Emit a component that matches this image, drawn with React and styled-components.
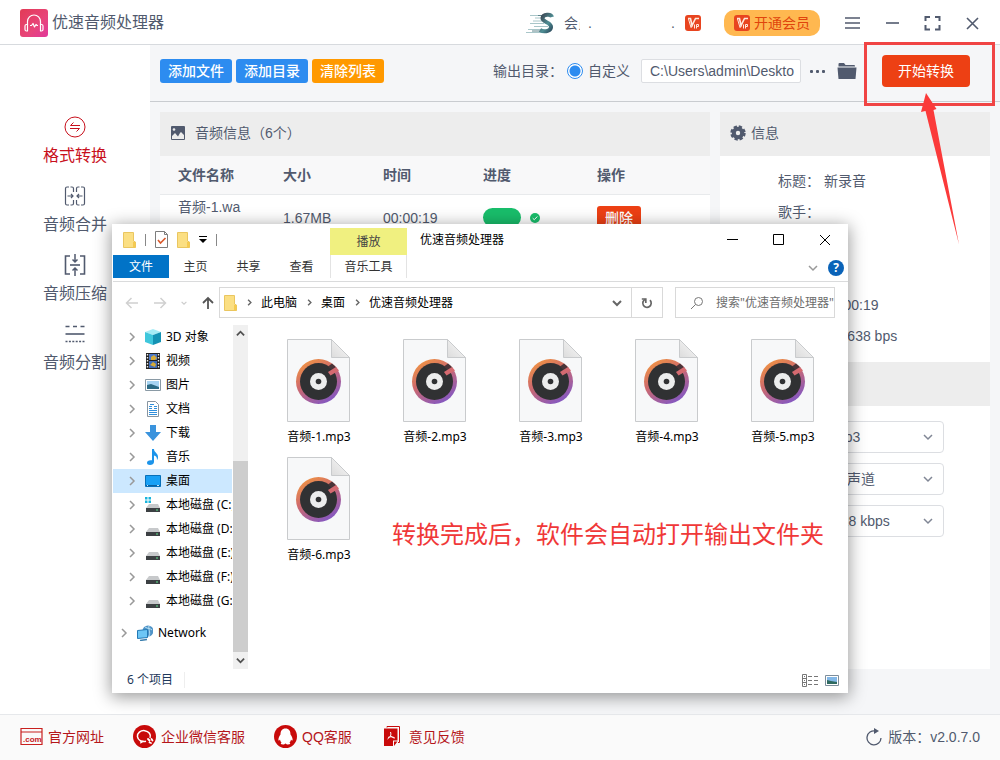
import React from 'react';
import styled, { createGlobalStyle } from 'styled-components';

const GlobalStyle = createGlobalStyle`
  * {
    box-sizing: border-box;
  }

  body {
    margin: 0;
    font-family: 'Liberation Sans', 'Noto Sans CJK SC', sans-serif;
    font-size: 14px;
    line-height: 20px;
    color: #515a6e;
  }

  button, input, select {
    font: inherit;
    color: inherit;
    margin: 0;
  }

  svg {
    display: block;
    flex: none;
  }
`;

// ---------- data ----------

const menuItems = [
  { title: '格式转换', icon: 'convert', active: true },
  { title: '音频合并', icon: 'merge' },
  { title: '音频压缩', icon: 'compress' },
  { title: '音频分割', icon: 'split' },
];

const audioFiles = [
  { name: '音频-1.wav', size: '1.67MB', time: '00:00:19' },
];

const details = [
  { label: '标题：', value: '新录音' },
  { label: '歌手：', value: '' },
  { label: '专辑：', value: '' },
  { label: '年代：', value: '' },
  { label: '时长：', value: '00:00:19' },
  { label: '码率：', value: '705638 bps' },
];

const settings = [
  { id: 'format', label: '格式：', value: 'mp3' },
  { id: 'channel', label: '声道：', value: '双声道' },
  { id: 'bitrate', label: '码率：', value: '128 kbps' },
];

const treeItems = [
  { title: '3D 对象', icon: 'cube' },
  { title: '视频', icon: 'video' },
  { title: '图片', icon: 'picture' },
  { title: '文档', icon: 'document' },
  { title: '下载', icon: 'download' },
  { title: '音乐', icon: 'music' },
  { title: '桌面', icon: 'desktop', active: true },
  { title: '本地磁盘 (C:)', icon: 'systemDisk' },
  { title: '本地磁盘 (D:)', icon: 'disk' },
  { title: '本地磁盘 (E:)', icon: 'disk' },
  { title: '本地磁盘 (F:)', icon: 'disk' },
  { title: '本地磁盘 (G:)', icon: 'disk' },
];

const outputFiles = ['音频-1.mp3', '音频-2.mp3', '音频-3.mp3', '音频-4.mp3', '音频-5.mp3', '音频-6.mp3'];

const links = [
  { title: '官方网址', icon: 'site' },
  { title: '企业微信客服', icon: 'wechat' },
  { title: 'QQ客服', icon: 'qq' },
  { title: '意见反馈', icon: 'feedback' },
];

// ---------- icons ----------

const LogoIcon = () => (
  <svg width="28" height="28" viewBox="0 0 28 28">
    <defs>
      <linearGradient id="logo" x1="0" y1="0" x2="1" y2="1">
        <stop offset="0" stopColor="#e23a55" />
        <stop offset="0.6" stopColor="#e8457a" />
        <stop offset="1" stopColor="#e0389c" />
      </linearGradient>
    </defs>
    <rect width="28" height="28" rx="3" fill="url(#logo)" />
    <g fill="none" stroke="#fff" strokeWidth="1.2" strokeLinejoin="round">
      <path d="M7.5 16v-3.500a6.500 6.500 0 0 1 13 0V16" />
      <path d="M7.500 15.500v6.500H6.500a1.500 1.500 0 0 1-1.500-1.500V17A1.500 1.500 0 0 1 6.500 15.500zM20.500 15.500v6.500H21.500a1.500 1.500 0 0 0 1.500-1.500V17a1.500 1.500 0 0 0-1.500-1.500z" />
      <path d="M10 16.500h1.500l1.500-2 1.500 3.500 1.500-2.500 1 1h1" />
    </g>
  </svg>
);

const AvatarIcon = () => (
  <svg width="28" height="24" viewBox="0 0 28 24">
    <defs>
      <linearGradient id="avatar" x1="0" y1="0" x2="1" y2="1">
        <stop offset="0" stopColor="#3a3f4c" />
        <stop offset="0.6" stopColor="#4f8f95" />
        <stop offset="1" stopColor="#2d4a5c" />
      </linearGradient>
    </defs>
    <path d="M4 4.500h14M9 7h7M7 10h9M4 12.500h14M8 15.500h14M2 18.500h14M0 21.500h22" stroke="#a9c6c9" strokeWidth="1" />
    <path d="M12 4.500h7M6 20h13" stroke="#5f858c" strokeWidth="1" />
    <path d="M26 6C25 2.500 17 3 16.500 7 16 11.500 26 11 25 16.500 24 21 17 21 14 19" fill="none" stroke="url(#avatar)" strokeWidth="4" />
  </svg>
);

const VipIcon = () => (
  <svg width="16" height="16" viewBox="0 0 16 16">
    <rect width="16" height="16" rx="3" fill="#e8441f" />
    <path d="M3 3.500h2.500l1.500 7 3.500-7H14" fill="none" stroke="#ffe9dc" strokeWidth="1.600" />
    <path d="M3.500 4l2.500 8.500 1.500-2M9.500 9.500v4M11.500 13.500v-4h2v2h-2" fill="none" stroke="#ffe9dc" strokeWidth="1" />
  </svg>
);

const windowPaths = {
  menu: 'M1 3h15M1 8h15M1 13h15',
  minimize: 'M2 8h13',
  fullscreen: 'M1.500 6V2H6M11 2h4.500v4M15.500 10v4.500H11M6 14.500H1.500V10',
  close: 'M3 3l11 11M14 3L3 14',
};

const WindowIcon = ({ name }) => (
  <svg width="17" height="17" viewBox="0 0 17 17" fill="none" stroke="#515a6e" strokeWidth={name === 'fullscreen' ? 2 : 1.6}>
    <path d={windowPaths[name]} />
  </svg>
);

const MenuIcon = ({ name }) => (
  <svg width="22" height="22" viewBox="0 0 22 22" fill="none" stroke="currentColor" strokeWidth="1.200">
    {name === 'convert' && (
      <>
        <circle cx="11" cy="11" r="10" strokeWidth="1" />
        <path d="M16 9.500H6.500L9.500 6.500M6 12.500h9.500L12.500 15.500" strokeWidth="1" />
      </>
    )}
    {name === 'merge' && (
      <>
        <path d="M5 2H3a1.500 1.500 0 0 0-1.500 1.500v15A1.500 1.500 0 0 0 3 20h2M6.500 2H8a1.500 1.500 0 0 1 1.500 1.500V7M6.500 20H8a1.500 1.500 0 0 0 1.500-1.500V15M12.500 7V3.500A1.500 1.500 0 0 1 14 2h1.500M12.500 15v3.500A1.500 1.500 0 0 0 14 20h1.500M17 2h2a1.500 1.500 0 0 1 1.500 1.500v15A1.500 1.500 0 0 1 19 20h-2" />
        <path d="M3.500 11H9M7 9l2 2-2 2M18.500 11H13M15 9l-2 2 2 2" />
      </>
    )}
    {name === 'compress' && (
      <>
        <path d="M6 2H1.500v18H6M16 2h4.500v18H16" strokeWidth="1.600" />
        <path d="M6 11h10" strokeWidth="1.600" />
        <path d="M11 0v8M8.500 5.500L11 8l2.500-2.500M11 22v-8M8.500 16.500L11 14l2.500 2.500" strokeWidth="1.500" />
      </>
    )}
    {name === 'split' && (
      <>
        <path d="M1.500 3.500h19" strokeWidth="1.600" strokeDasharray="4 3.500" />
        <path d="M1.500 11h19" strokeWidth="1.600" />
        <path d="M1.500 18.500h19" strokeWidth="1.600" strokeDasharray="2 1.400" />
      </>
    )}
  </svg>
);

const FolderSolidIcon = () => (
  <svg width="20" height="18" viewBox="0 0 20 18" fill="#515a6e">
    <path d="M1.500 4.500V2a1 1 0 0 1 1-1H7l1.500 2H17a1 1 0 0 1 1 1v.5z" />
    <path d="M.5 5.500h19L18.500 17h-17z" />
  </svg>
);

const ImageIcon = () => (
  <svg width="16" height="16" viewBox="0 0 16 16">
    <rect x="1" y="1" width="14" height="14" rx="1" fill="#515a6e" />
    <circle cx="4" cy="4.500" r="1.300" fill="#ededed" />
    <path d="M2 14v-3l3-3 3 3.500 2-3.500 1-1 3 3v4z" fill="#ededed" />
  </svg>
);

const GearIcon = () => (
  <svg width="16" height="16" viewBox="0 0 16 16">
    <circle cx="8" cy="8" r="6" fill="none" stroke="#515a6e" strokeWidth="3.400" strokeDasharray="3 1.712" />
    <circle cx="8" cy="8" r="4.200" fill="none" stroke="#515a6e" strokeWidth="4" />
  </svg>
);

const CheckIcon = () => (
  <svg width="10" height="10" viewBox="0 0 10 10">
    <circle cx="5" cy="5" r="5" fill="#19be6b" />
    <path d="M2.700 5.200l1.600 1.500 3-3.200" fill="none" stroke="#fff" />
  </svg>
);

const Chevron = ({ direction = 'down', size = 10, color = '#808695', width = 1.5 }) => {
  const paths = { down: 'M1 3l4 4 4-4', up: 'M1 7l4-4 4 4', right: 'M3 1l4 4-4 4' };
  return (
    <svg width={size} height={size} viewBox="0 0 10 10" fill="none" stroke={color} strokeWidth={width}>
      <path d={paths[direction]} />
    </svg>
  );
};

const FolderIcon = () => (
  <svg width="13" height="16" viewBox="0 0 13 16">
    <path d="M.5.500h10V9l2 1v5.500H.5z" fill="#fbdf83" stroke="#eac660" />
    <path d="M10 10v5.500h2.500V10z" fill="#f5ca50" />
  </svg>
);

const CheckDocIcon = () => (
  <svg width="13" height="17" viewBox="0 0 13 17" fill="none">
    <path d="M.5.500h9l3 3v13H.5z" stroke="#7d7d7d" fill="#fff" />
    <path d="M9.500.500v3h3" stroke="#7d7d7d" />
    <path d="M3 9l2.500 3L10.500 7" stroke="#d9582b" strokeWidth="1.600" />
  </svg>
);

const navPaths = {
  back: 'M13 7H1.500M6.500 2l-5 5 5 5',
  forward: 'M1 7h11.500M7.500 2l5 5-5 5',
  up: 'M7 13V2M2 7l5-5 5 5',
};

const NavIcon = ({ name, color, width = 1.5 }) => (
  <svg width="14" height="14" viewBox="0 0 14 14" fill="none" stroke={color} strokeWidth={width}>
    <path d={navPaths[name]} />
  </svg>
);

const RefreshIcon = () => (
  <svg width="14" height="14" viewBox="0 0 14 14" fill="none" stroke="#666" strokeWidth="1.700">
    <path d="M5.500 3.200A4.200 4.200 0 1 0 10 4.200" />
    <path d="M5.800 7V3h-4" />
  </svg>
);

const SearchIcon = () => (
  <svg width="14" height="14" viewBox="0 0 14 14" fill="none" stroke="#777">
    <circle cx="8.500" cy="5.500" r="4" />
    <path d="M5.500 8.500L1 13" />
  </svg>
);

const TreeIcon = ({ name }) => (
  <svg width="16" height="16" viewBox="0 0 16 16">
    {name === 'cube' && (
      <>
        <path d="M0 3L8 0l8 3L8 6z" fill="#a6ecf5" />
        <path d="M0 3L8 6v10l-8-3z" fill="#3fc7dc" />
        <path d="M16 3L8 6v10l8-3z" fill="#1593b4" />
      </>
    )}
    {name === 'video' && (
      <>
        <path d="M1 0h14v16H1z" fill="#222" />
        <path d="M4 1h8v6H4z" fill="#4b78c8" />
        <path d="M4 8h8v7H4z" fill="#3f6cba" />
        <path d="M6 4l3-2 3 3-2 2H6zM5 12l3-3 3 2-1 3z" fill="#d6ab38" />
        <path d="M2.500 1v15M13.500 1v15" stroke="#eee" strokeWidth="1.400" strokeDasharray="1.500 1.500" />
      </>
    )}
    {name === 'picture' && (
      <>
        <path d="M.5 2.500h15v11H.5z" fill="#fff" stroke="#8a9aa5" />
        <path d="M2 4h12v8H2z" fill="#a7d4f2" />
        <path d="M2 8l4-1 8 3v2H2z" fill="#2c6b85" />
      </>
    )}
    {name === 'document' && (
      <>
        <path d="M2.500.500h8l3 3v12h-11z" fill="#fff" stroke="#8795a1" />
        <path d="M4 5.500h3M4 7.500h3M9 5.500h3M9 7.500h3M4 9.500h8M4 11.500h8M4 13.500h8M5 3.500h4" stroke="#2f8fdc" />
      </>
    )}
    {name === 'download' && <path d="M5 0h6v7h5l-8 9-8-9h5z" fill="#3a93dd" />}
    {name === 'music' && (
      <path d="M7 0h2c0 3.500 4 4 4 8 0 1.500-.5 2.500-1 3 0-3-1-4-3-4.500V13c0 2-2 3-4 3s-3-1-3-2.300C2 12 4 10.800 7 11.300z" fill="#1c94ea" />
    )}
    {name === 'desktop' && (
      <>
        <path d="M.5 2.500h15v11H.5z" fill="#18a0f5" stroke="#0870b8" />
        <path d="M1 12.500h14" stroke="#0b5f9e" />
        <path d="M2 12.500h1M12 12.500h2" stroke="#c5e8ff" />
      </>
    )}
    {(name === 'disk' || name === 'systemDisk') && (
      <>
        <path d="M4 7h9l2 4H1z" fill="#c7c9cb" />
        <path d="M1 11h14v4H1z" fill="#3c4043" />
        <path d="M11 13h2" stroke="#5de08a" />
      </>
    )}
    {name === 'systemDisk' && <path d="M0 0h2.500v2.500H0zM3.500 0H6v2.500H3.500zM0 3.500h2.500V6H0zM3.500 3.500H6V6H3.500z" fill="#19b4dc" />}
    {name === 'network' && (
      <>
        <circle cx="11" cy="6" r="5.500" fill="#4f93c7" />
        <path d="M8 2c3 2 5 1 7 3M12 1c-1 3 2 6 0 10" stroke="#b9e2f5" fill="none" />
        <path d="M.5 5.500l10-1v8l-10 1z" fill="#6dc6f5" stroke="#2379b5" />
        <path d="M3 15.500l7-1" stroke="#3b7fae" strokeWidth="1.500" />
      </>
    )}
  </svg>
);

const Mp3Icon = () => (
  <svg width="64" height="84" viewBox="0 0 64 84">
    <defs>
      <linearGradient id="ring" x1="0.1" y1="0" x2="0.7" y2="1">
        <stop offset="0" stopColor="#f59a3c" />
        <stop offset="0.45" stopColor="#cf6a6c" />
        <stop offset="1" stopColor="#8257c4" />
      </linearGradient>
      <linearGradient id="fold" x1="0" y1="1" x2="1" y2="0">
        <stop offset="0" stopColor="#dcdcdc" />
        <stop offset="1" stopColor="#fafafa" />
      </linearGradient>
    </defs>
    <path d="M.5.500h44l18 18v64H.5z" fill="#f7f8f9" stroke="#c9cbcd" />
    <path d="M44.500.500v18h18z" fill="url(#fold)" stroke="#c9cbcd" />
    <circle cx="31.500" cy="42.500" r="22.500" fill="url(#ring)" />
    <circle cx="31.500" cy="42.500" r="18.500" fill="#303133" />
    <path d="M41 27.500l4-3 4.500 4-4.500 3z" fill="#4a3438" />
    <path d="M41 33l8-5 3 3.500-8.500 5z" fill="#d46a70" />
    <circle cx="31.500" cy="42.500" r="8.500" fill="#eceded" />
    <circle cx="31.500" cy="42.500" r="2.800" fill="#303133" />
  </svg>
);

const ListViewIcon = () => (
  <svg width="16" height="13" viewBox="0 0 16 13" fill="none" stroke="#777">
    <path d="M.5.500h4v12h-4zM.5 4.500h4M.5 8.500h4" />
    <path d="M6 2.500h4M12 2.500h4M6 6.500h4M12 6.500h4M6 10.500h4M12 10.500h4M2 2.500h1M2 6.500h1M2 10.500h1" />
  </svg>
);

const ThumbViewIcon = () => (
  <svg width="14" height="11" viewBox="0 0 14 11">
    <path d="M.5.500h13v10H.5z" fill="#fff" stroke="#7d8e9c" />
    <path d="M2 2h10v7H2z" fill="#83b8e8" />
    <path d="M2 5l4 1 6 1v2H2z" fill="#2f6a60" />
  </svg>
);

const LinkIcon = ({ name }) => (
  <svg width="23" height="23" viewBox="0 0 23 23">
    {name === 'site' && (
      <>
        <path d="M1 3.500h21v16H1zM1 7h21" fill="none" stroke="#c8201e" strokeWidth="1.200" />
        <text x="3" y="17" fontSize="8" fontWeight="bold" fill="#c8201e">.com</text>
      </>
    )}
    {name === 'wechat' && (
      <>
        <circle cx="11.500" cy="11.500" r="11.500" fill="#c80a0a" />
        <path d="M17 13a6.500 5.500 0 1 0-4 3.300M8 15.500v2l2.500-1.500" fill="none" stroke="#fff" strokeWidth="1.500" />
        <path d="M15 14l1.500 1.500M18.500 14l1 1.500M16.500 17.500l1.500.5" fill="none" stroke="#fff" strokeWidth="1.800" strokeLinecap="round" />
      </>
    )}
    {name === 'qq' && (
      <>
        <circle cx="11.500" cy="11.500" r="11.500" fill="#c80a0a" />
        <path d="M11.500 3.500c-3.500 0-5 2.500-5 6-1.500 2-2.500 4.500-2 6 .5.500 1.500-1 1.500-1 .2 1.500 1 2.500 1.500 3-1.500 1-.500 2 1.500 2 1 0 2-.5 2.500-1 .5.500 1.500 1 2.500 1 2 0 3-1 1.500-2 .5-.5 1.300-1.500 1.500-3 0 0 1 1.500 1.500 1 .5-1.500-.5-4-2-6 0-3.500-1.500-6-5-6z" fill="#fff" />
      </>
    )}
    {name === 'feedback' && (
      <>
        <path d="M6 2.500V1.500h12.500v16H17" fill="none" stroke="#c80a0a" />
        <path d="M3 3.500h13.500v12H12v5.500H3zM13 21v-4.500h3.500z" fill="#c80a0a" />
        <path d="M9.500 7c1 3 0 5-3 7M9.500 10.500c1 1.500 2.500 2.500 4.500 2.500M7 12.500c2-1 4-1 6 0" fill="none" stroke="#fff" />
      </>
    )}
  </svg>
);

// ---------- styled components ----------

const App = styled.div`
  position: relative;
  display: flex;
  flex-direction: column;
  min-height: 100vh;
  background-color: #f5f6f8;
`;

const TitleBar = styled.header`
  display: flex;
  align-items: center;
  height: 45px;
  padding: 2px 19px 0 20px;
  background-color: #fff;
  border-bottom: 1px solid #d7dade;
`;

const AppName = styled.h1`
  flex: 1;
  margin: 0 0 0 4px;
  font-size: 16px;
  font-weight: 400;
`;

const Account = styled.div`
  display: flex;
  align-items: center;
  gap: 10px;
  width: 175px;
  margin-right: 23px;
`;

const AccountName = styled.span`
  flex: 1;
  display: flex;
  gap: 8px;
`;

const ClippedName = styled.span`
  width: 16px;
  height: 20px;
  overflow: hidden;
  white-space: nowrap;
`;

const LastDot = styled.span`
  margin-left: auto;
`;

const VipButton = styled.button`
  display: flex;
  align-items: center;
  gap: 4px;
  height: 26px;
  margin-right: 24px;
  padding: 0 10px;
  border: none;
  border-radius: 10px;
  background-color: #ffb850;
  color: #e0440c;
`;

const WindowButtons = styled.div`
  display: flex;
  gap: 23px;
`;

const PlainButton = styled.button`
  display: flex;
  align-items: center;
  justify-content: center;
  padding: 0;
  border: none;
  background: none;
`;

const Body = styled.div`
  flex: 1;
  display: flex;
`;

const Sidebar = styled.nav`
  flex: none;
  display: flex;
  flex-direction: column;
  gap: 17px;
  width: 150px;
  padding-top: 71px;
  background-color: #fff;
`;

const SidebarItem = styled.button`
  display: flex;
  flex-direction: column;
  align-items: center;
  gap: 6px;
  height: 52px;
  padding: 0;
  border: none;
  background: none;
  font-size: 16px;
  line-height: 24px;
  color: ${(props) => (props.$active ? '#c8101c' : '#515a6e')};
`;

const Main = styled.main`
  flex: 1;
  min-width: 0;
  display: flex;
  flex-direction: column;
`;

const Toolbar = styled.div`
  display: flex;
  align-items: center;
  gap: 4px;
  height: 57px;
  padding: 0 30px 4px 10px;
  border-bottom: 1px solid #c9ccd0;
`;

const SmallButton = styled.button`
  height: 24px;
  padding: 0 8px;
  border: none;
  border-radius: 3px;
  background-color: ${(props) => props.$color};
  color: #fff;
  font-weight: 500;
  line-height: 20px;
  white-space: nowrap;
`;

const Output = styled.div`
  display: flex;
  align-items: center;
  margin-left: auto;
  white-space: nowrap;
`;

const RadioLabel = styled.label`
  display: flex;
  align-items: center;
  gap: 5px;
  margin: 0 11px 0 4px;
`;

const Radio = styled.input`
  appearance: none;
  width: 16px;
  height: 16px;
  border: 1px solid #2d8cf0;
  border-radius: 50%;
  background: radial-gradient(circle, #2d8cf0 5px, #fff 6px);
`;

const PathInput = styled.input`
  width: 160px;
  height: 24px;
  padding: 0 5px 0 8px;
  border: 1px solid #dcdee2;
  border-radius: 2px;
  background-color: #fff;
`;

const OutputButton = styled(PlainButton)`
  width: 20px;
  margin-left: ${(props) => props.$gap}px;
`;

const Dots = styled.span`
  display: flex;
  gap: 3px;

  i {
    width: 3px;
    height: 3px;
    border-radius: 1px;
    background-color: #515a6e;
  }
`;

const StartArea = styled.div`
  position: relative;
  margin-left: 21px;
`;

const StartButton = styled.button`
  display: block;
  height: 32px;
  padding: 0 16px;
  border: none;
  border-radius: 4px;
  background-color: #ed4014;
  color: #fff;
  white-space: nowrap;
`;

const Highlight = styled.div`
  position: absolute;
  inset: -13px -25px -19px -18px;
  border: 3px solid #f04444;
  pointer-events: none;
`;

const Arrow = styled.svg`
  position: absolute;
  z-index: 2;
  top: 38px;
  left: 38px;
  pointer-events: none;
`;

const Panels = styled.div`
  flex: 1;
  display: flex;
  gap: 10px;
  padding: 10px 10px 45px;
`;

const Panel = styled.section`
  flex: ${(props) => (props.$width ? 'none' : 1)};
  width: ${(props) => (props.$width ? `${props.$width}px` : 'auto')};
  background-color: #fff;
`;

const PanelTitle = styled.h2`
  display: flex;
  align-items: center;
  gap: ${(props) => props.$gap || 5}px;
  height: 44px;
  margin: 0;
  padding: 0 10px 2px;
  background-color: #ededed;
  font-size: 14px;
  font-weight: 400;
`;

const Table = styled.table`
  width: 100%;
  border-collapse: collapse;
  table-layout: fixed;
  text-align: left;

  th {
    height: 38px;
    padding: 0 18px;
    background-color: #f8f8f9;
    border-bottom: 1px solid #e8eaec;
    font-weight: 700;
  }

  td {
    height: 47px;
    padding: 0 20px 0 18px;
    line-height: 22px;
    word-break: break-all;
  }

  td:nth-child(3) {
    padding-right: 0;
  }
`;

const Column = styled.col`
  width: ${(props) => props.$width};
`;

const Progress = styled.div`
  display: flex;
  align-items: center;
  gap: 9px;
`;

const ProgressBar = styled.div`
  width: 38px;
  height: 19px;
  border-radius: 10px;
  background-color: #19be6b;
`;

const DetailList = styled.dl`
  display: grid;
  grid-template-columns: 46px 1fr;
  grid-auto-rows: 31px;
  align-items: center;
  height: 206px;
  margin: 0;
  padding: 9px 10px 0 58px;

  dt, dd {
    margin: 0;
    white-space: nowrap;
  }
`;

const Settings = styled.div`
  display: flex;
  flex-direction: column;
  gap: 10px;
  padding: 15px 46px 0 58px;
`;

const SettingRow = styled.div`
  display: grid;
  grid-template-columns: 45px 1fr;
  align-items: center;
`;

const SelectBox = styled.div`
  display: grid;
  align-items: center;

  select, svg {
    grid-area: 1 / 1;
  }

  svg {
    justify-self: end;
    margin-right: 11px;
    pointer-events: none;
  }
`;

const Select = styled.select`
  appearance: none;
  width: 100%;
  height: 32px;
  padding: 0 24px 0 9px;
  border: 1px solid #dcdee2;
  border-radius: 4px;
  background-color: #fff;
`;

const Footer = styled.footer`
  display: flex;
  align-items: center;
  height: 46px;
  padding: 0 20px 2px;
  background-color: #fafafa;
  border-top: 1px solid #e6e8eb;
`;

const FooterLinks = styled.div`
  flex: 1;
  display: flex;
  gap: 29px;
`;

const FooterLink = styled.a`
  display: flex;
  align-items: center;
  gap: 5px;
  color: #b5161a;
  text-decoration: none;
`;

const Version = styled.div`
  display: flex;
  align-items: center;
  gap: 6px;
`;

// file manager window

const Explorer = styled.section`
  position: absolute;
  top: 224px;
  left: 112px;
  display: flex;
  flex-direction: column;
  width: 736px;
  height: 469px;
  padding-left: 1px;
  background-color: #fff;
  box-shadow: 0 3px 16px 1px rgba(0, 0, 0, 0.4);
  font-family: 'Noto Sans', 'Noto Sans CJK SC', sans-serif;
  font-size: 12px;
  color: #000;
`;

const ExplorerHeader = styled.div`
  display: flex;
  align-items: center;
  height: 31px;
  padding-right: 17px;
`;

const QuickAccess = styled.div`
  display: flex;
  align-items: center;
  gap: 9px;
  width: 217px;
  padding-left: 10px;
`;

const Divider = styled.span`
  width: 1px;
  height: ${(props) => props.$height || 12}px;
  background-color: ${(props) => props.$color || '#888'};
`;

const Caret = styled.span`
  width: 8px;
  border-top: 1px solid #000;
  padding-top: 2px;

  &::after {
    content: '';
    display: block;
    border: 4px solid transparent;
    border-top-color: #000;
    border-bottom: none;
  }
`;

const PlayTab = styled.div`
  align-self: flex-end;
  display: flex;
  align-items: center;
  justify-content: center;
  width: 77px;
  height: 27px;
  background-color: #f0f080;
  color: #444;
`;

const ExplorerTitle = styled.h2`
  flex: 1;
  margin: 0 0 0 13px;
  font-size: 12px;
  font-weight: 400;
`;

const ExplorerControls = styled.div`
  display: flex;
  gap: 35px;
`;

const Ribbon = styled.div`
  display: flex;
  align-items: flex-start;
  height: 27px;
  padding-right: 4px;
  border-bottom: 1px solid #dadbdc;
`;

const RibbonTab = styled.button`
  width: ${(props) => props.$width}px;
  height: 23px;
  margin-left: ${(props) => props.$offset || 0}px;
  padding: 0;
  border: solid #e3e3e3;
  border-width: ${(props) => (props.$framed ? '0 1px' : '0')};
  background-color: ${(props) => (props.$primary ? '#0173c7' : '#fff')};
  color: ${(props) => (props.$primary ? '#fff' : '#333')};
`;

const RibbonEnd = styled.div`
  display: flex;
  align-items: center;
  gap: 10px;
  height: 26px;
  margin-left: auto;
`;

const HelpButton = styled(PlainButton)`
  width: 16px;
  height: 16px;
  border-radius: 50%;
  background-color: #0a63b8;
  color: #fff;
  font-weight: 700;
`;

const AddressRow = styled.div`
  display: flex;
  align-items: center;
  height: 42px;
  padding: 0 13px 1px 12px;
`;

const NavButtons = styled.div`
  display: flex;
  align-items: center;
  gap: 14px;
  width: 94px;
`;

const Address = styled.div`
  flex: 1;
  display: flex;
  align-items: center;
  gap: 9px;
  height: 31px;
  padding-left: 4px;
  border: 1px solid #d9d9d9;
`;

const Crumb = styled.span`
  display: flex;
  align-items: center;
  gap: 8px;
`;

const AddressEnd = styled.div`
  display: flex;
  align-items: center;
  height: 29px;
  margin-left: auto;
`;

const RefreshButton = styled(PlainButton)`
  width: 31px;
  height: 29px;
  margin-left: 9px;
  border-left: 1px solid #d9d9d9;
`;

const SearchBox = styled.label`
  display: flex;
  align-items: center;
  gap: 12px;
  width: 160px;
  height: 31px;
  margin-left: 12px;
  padding-left: 14px;
  border: 1px solid #d9d9d9;
`;

const SearchInput = styled.input`
  flex: 1;
  min-width: 0;
  padding: 0;
  border: none;
  outline: none;

  &::placeholder {
    color: #6d6d6d;
    opacity: 1;
  }
`;

const ExplorerBody = styled.div`
  flex: 1;
  display: flex;
  min-height: 0;
`;

const Tree = styled.div`
  width: 119px;
  padding-top: 1px;
`;

const TreeRow = styled.div`
  display: flex;
  align-items: center;
  height: 24px;
  margin-top: ${(props) => (props.$root ? 8 : 0)}px;
  padding-left: ${(props) => (props.$root ? 6 : 14)}px;
  background-color: ${(props) => (props.$active ? '#cce8ff' : 'transparent')};
  overflow: hidden;
  white-space: nowrap;
`;

const TreeGlyph = styled.span`
  margin: 0 5px 0 8px;
`;

const ScrollBar = styled.div`
  display: flex;
  flex-direction: column;
  align-items: center;
  justify-content: space-between;
  width: 15px;
  margin: 1px 0 0 1px;
  background-color: #f0f0f0;
`;

const ScrollArrow = styled(PlainButton)`
  width: 15px;
  height: 17px;
`;

const ScrollThumb = styled.div`
  width: 15px;
  height: 191px;
  margin-top: auto;
  background-color: #cdcdcd;
`;

const Files = styled.div`
  flex: 1;
  display: grid;
  grid-template-columns: repeat(5, 116px);
  grid-auto-rows: 118px;
  align-content: start;
  padding: 15px 0 0 13px;
`;

const FileTile = styled.figure`
  display: flex;
  flex-direction: column;
  align-items: center;
  gap: 4px;
  margin: 0;
`;

const Note = styled.p`
  position: absolute;
  top: 292px;
  left: 280px;
  margin: 0;
  font-size: 24px;
  line-height: 36px;
  color: #f03838;
  white-space: nowrap;
`;

const StatusBar = styled.div`
  display: flex;
  align-items: center;
  gap: 7px;
  height: 24px;
  padding: 0 9px 2px 14px;
  color: #1e395b;
`;

const ItemCount = styled.span`
  margin-right: 4px;
`;

const ViewButtons = styled.div`
  display: flex;
  align-items: center;
  gap: 7px;
  margin-left: auto;
`;

// ---------- sections ----------

const Header = () => (
  <TitleBar>
    <LogoIcon />
    <AppName>优速音频处理器</AppName>
    <Account>
      <AvatarIcon />
      <AccountName>
        <ClippedName>会员</ClippedName>
        <span>.</span>
        <LastDot>.</LastDot>
      </AccountName>
      <VipIcon />
    </Account>
    <VipButton type="button">
      <VipIcon />
      开通会员
    </VipButton>
    <WindowButtons>
      {Object.keys(windowPaths).map((name) => (
        <PlainButton key={name} type="button" aria-label={name}>
          <WindowIcon name={name} />
        </PlainButton>
      ))}
    </WindowButtons>
  </TitleBar>
);

const ActionBar = () => (
  <Toolbar>
    <SmallButton type="button" $color="#2d8cf0">添加文件</SmallButton>
    <SmallButton type="button" $color="#2d8cf0">添加目录</SmallButton>
    <SmallButton type="button" $color="#ff9900">清除列表</SmallButton>
    <Output>
      <span>输出目录：</span>
      <RadioLabel>
        <Radio type="radio" name="output" defaultChecked />
        自定义
      </RadioLabel>
      <PathInput aria-label="输出目录" defaultValue="C:\Users\admin\Deskto" />
      <OutputButton type="button" aria-label="选择目录" $gap={6}>
        <Dots><i /><i /><i /></Dots>
      </OutputButton>
      <OutputButton type="button" aria-label="打开目录" $gap={10}>
        <FolderSolidIcon />
      </OutputButton>
    </Output>
    <StartArea>
      <StartButton type="button">开始转换</StartButton>
      <Highlight />
      <Arrow width="42" height="154" viewBox="0 0 42 154">
        <path d="M6 0L16.500 16l-3 1L39 151.500 5.500 18 1 19z" fill="#fb3a3a" />
      </Arrow>
    </StartArea>
  </Toolbar>
);

const AudioPanel = () => (
  <Panel>
    <PanelTitle $gap={9}>
      <ImageIcon />
      音频信息（6个）
    </PanelTitle>
    <Table>
      <colgroup>
        <Column $width="105px" />
        <Column $width="100px" />
        <Column $width="100px" />
        <Column $width="114px" />
        <Column $width="auto" />
      </colgroup>
      <thead>
        <tr>
          <th>文件名称</th>
          <th>大小</th>
          <th>时间</th>
          <th>进度</th>
          <th>操作</th>
        </tr>
      </thead>
      <tbody>
        {audioFiles.map((file) => (
          <tr key={file.name}>
            <td>{file.name}</td>
            <td>{file.size}</td>
            <td>{file.time}</td>
            <td>
              <Progress>
                <ProgressBar />
                <CheckIcon />
              </Progress>
            </td>
            <td>
              <SmallButton type="button" $color="#ed4014">删除</SmallButton>
            </td>
          </tr>
        ))}
      </tbody>
    </Table>
  </Panel>
);

const InfoPanel = () => (
  <Panel $width={270}>
    <PanelTitle>
      <GearIcon />
      信息
    </PanelTitle>
    <DetailList>
      {details.map((item) => (
        <React.Fragment key={item.label}>
          <dt>{item.label}</dt>
          <dd>{item.value}</dd>
        </React.Fragment>
      ))}
    </DetailList>
    <PanelTitle>
      <GearIcon />
      设置
    </PanelTitle>
    <Settings>
      {settings.map((item) => (
        <SettingRow key={item.id}>
          <label htmlFor={item.id}>{item.label}</label>
          <SelectBox>
            <Select id={item.id}>
              <option>{item.value}</option>
            </Select>
            <Chevron />
          </SelectBox>
        </SettingRow>
      ))}
    </Settings>
  </Panel>
);

const ExplorerWindow = () => (
  <Explorer>
    <ExplorerHeader>
      <QuickAccess>
        <FolderIcon />
        <Divider />
        <CheckDocIcon />
        <FolderIcon />
        <Caret />
        <Divider />
      </QuickAccess>
      <PlayTab>播放</PlayTab>
      <ExplorerTitle>优速音频处理器</ExplorerTitle>
      <ExplorerControls>
        <PlainButton type="button" aria-label="最小化">
          <svg width="11" height="11"><path d="M0 5.500h11" stroke="#000" /></svg>
        </PlainButton>
        <PlainButton type="button" aria-label="最大化">
          <svg width="11" height="11"><path d="M.5.500h10v10H.5z" stroke="#000" fill="none" /></svg>
        </PlainButton>
        <PlainButton type="button" aria-label="关闭">
          <svg width="12" height="12"><path d="M1 1l10 10M11 1L1 11" stroke="#000" /></svg>
        </PlainButton>
      </ExplorerControls>
    </ExplorerHeader>
    <Ribbon>
      <RibbonTab type="button" $width={56} $primary>文件</RibbonTab>
      <RibbonTab type="button" $width={53}>主页</RibbonTab>
      <RibbonTab type="button" $width={53}>共享</RibbonTab>
      <RibbonTab type="button" $width={53}>查看</RibbonTab>
      <RibbonTab type="button" $width={77} $offset={2} $framed>音乐工具</RibbonTab>
      <RibbonEnd>
        <Chevron color="#999" />
        <HelpButton type="button">?</HelpButton>
      </RibbonEnd>
    </Ribbon>
    <AddressRow>
      <NavButtons>
        <NavIcon name="back" color="#d0d0d0" />
        <NavIcon name="forward" color="#d0d0d0" />
        <Chevron size={6} color="#ccc" width={2} />
        <NavIcon name="up" color="#555" width={1.8} />
      </NavButtons>
      <Address>
        <FolderIcon />
        {['此电脑', '桌面', '优速音频处理器'].map((name) => (
          <Crumb key={name}>
            <Chevron direction="right" size={7} color="#666" width={2} />
            {name}
          </Crumb>
        ))}
        <AddressEnd>
          <Chevron color="#666" width={2} />
          <RefreshButton type="button" aria-label="刷新">
            <RefreshIcon />
          </RefreshButton>
        </AddressEnd>
      </Address>
      <SearchBox>
        <SearchIcon />
        <SearchInput aria-label="搜索" placeholder={'搜索"优速音频处理器"'} />
      </SearchBox>
    </AddressRow>
    <ExplorerBody>
      <Tree>
        {treeItems.map((item) => (
          <TreeRow key={item.title} $active={item.active}>
            <Chevron direction="right" color="#999" />
            <TreeGlyph><TreeIcon name={item.icon} /></TreeGlyph>
            {item.title}
          </TreeRow>
        ))}
        <TreeRow $root>
          <Chevron direction="right" color="#999" />
          <TreeGlyph><TreeIcon name="network" /></TreeGlyph>
          Network
        </TreeRow>
      </Tree>
      <ScrollBar>
        <ScrollArrow type="button" aria-label="向上">
          <Chevron direction="up" size={9} color="#505050" width={2} />
        </ScrollArrow>
        <ScrollThumb />
        <ScrollArrow type="button" aria-label="向下">
          <Chevron size={9} color="#505050" width={2} />
        </ScrollArrow>
      </ScrollBar>
      <Files>
        {outputFiles.map((name) => (
          <FileTile key={name}>
            <Mp3Icon />
            <figcaption>{name}</figcaption>
          </FileTile>
        ))}
      </Files>
    </ExplorerBody>
    <StatusBar>
      <ItemCount>6 个项目</ItemCount>
      <Divider $height={16} $color="#eee" />
      <ViewButtons>
        <PlainButton type="button" aria-label="详细信息"><ListViewIcon /></PlainButton>
        <PlainButton type="button" aria-label="缩略图"><ThumbViewIcon /></PlainButton>
      </ViewButtons>
    </StatusBar>
    <Note>转换完成后，软件会自动打开输出文件夹</Note>
  </Explorer>
);

const AudioConverter = () => {
  return (
    <App>
      <GlobalStyle />
      <Header />
      <Body>
        <Sidebar>
          {menuItems.map((item) => (
            <SidebarItem key={item.title} type="button" $active={item.active}>
              <MenuIcon name={item.icon} />
              {item.title}
            </SidebarItem>
          ))}
        </Sidebar>
        <Main>
          <ActionBar />
          <Panels>
            <AudioPanel />
            <InfoPanel />
          </Panels>
        </Main>
      </Body>
      <Footer>
        <FooterLinks>
          {links.map((link) => (
            <FooterLink key={link.title} href="#">
              <LinkIcon name={link.icon} />
              {link.title}
            </FooterLink>
          ))}
        </FooterLinks>
        <Version>
          <svg width="16" height="18" viewBox="0 0 16 18" fill="none" stroke="#515a6e" strokeWidth="1.300">
            <path d="M9.500 3A7 7 0 1 0 15 10" />
            <path d="M8 0l5 3-5 3z" fill="#515a6e" stroke="none" />
          </svg>
          <span>版本：v2.0.7.0</span>
        </Version>
      </Footer>
      <ExplorerWindow />
    </App>
  );
};

export default AudioConverter;
